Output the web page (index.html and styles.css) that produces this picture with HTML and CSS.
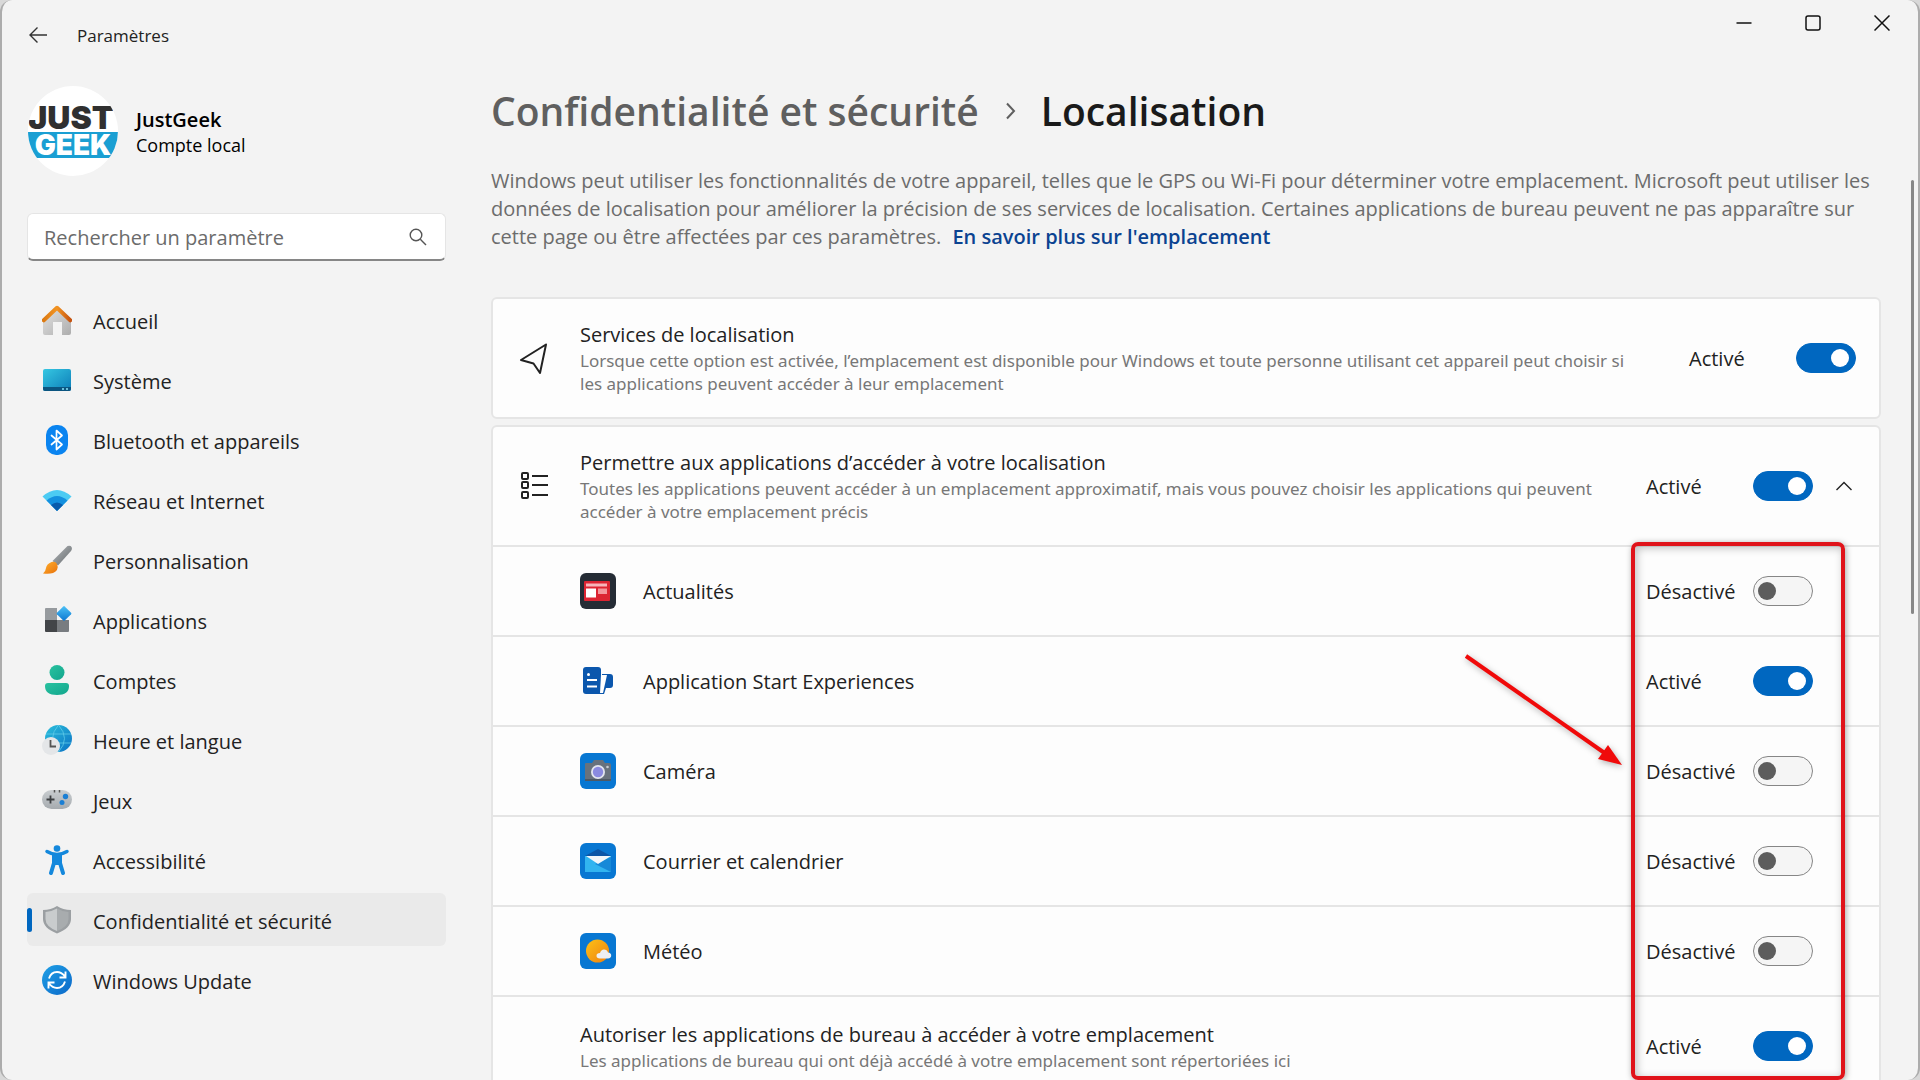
FILE: index.html
```
<!DOCTYPE html>
<html lang="fr">
<head>
    <meta charset="UTF-8">
    <meta name="viewport" content="width=device-width, initial-scale=1.0">
    <title>Paramètres</title>
    <link rel="stylesheet" href="styles.css">
</head>
<body>
    <div class="window">
        <header class="titlebar">
            <button class="back" aria-label="Retour">
                <svg width="20" height="18" viewBox="0 0 20 18"><path d="M19 9H2M9.500 1.500L2 9l7.500 7.500" fill="none" stroke="#333" stroke-width="1.400"/></svg>
            </button>
            <span class="window-title">Paramètres</span>
            <div class="window-controls">
                <button aria-label="Réduire"><svg width="16" height="16" viewBox="0 0 16 16"><path d="M.5 8h15" stroke="#111" stroke-width="1.500"/></svg></button>
                <button aria-label="Agrandir"><svg width="16" height="16" viewBox="0 0 16 16"><rect x="1" y="1" width="14" height="14" rx="2" fill="none" stroke="#111" stroke-width="1.500"/></svg></button>
                <button aria-label="Fermer"><svg width="16" height="16" viewBox="0 0 16 16"><path d="M.5.5l15 15M15.500.5l-15 15" stroke="#111" stroke-width="1.500"/></svg></button>
            </div>
        </header>

        <div class="layout">
            <aside class="sidebar">
                <div class="account">
                    <svg class="avatar" viewBox="0 0 90 90">
                        <defs><clipPath id="round"><circle cx="45" cy="45" r="45"/></clipPath></defs>
                        <circle cx="45" cy="45" r="45" fill="#fff"/>
                        <g clip-path="url(#round)">
                            <text x="43" y="43" class="logo-top">JUST</text>
                            <rect y="46" width="90" height="26" fill="#1a9fd3"/>
                            <text x="45" y="69" class="logo-bottom">GEEK</text>
                        </g>
                    </svg>
                    <div>
                        <div class="account-name">JustGeek</div>
                        <div class="account-type">Compte local</div>
                    </div>
                </div>

                <div class="search">
                    <input type="text" placeholder="Rechercher un paramètre" aria-label="Rechercher un paramètre">
                    <svg width="18" height="18" viewBox="0 0 18 18"><circle cx="7" cy="7" r="5.800" fill="none" stroke="#555" stroke-width="1.400"/><path d="M11.300 11.300l5.700 5.700" stroke="#555" stroke-width="1.400"/></svg>
                </div>

                <nav class="nav">
                    <a href="#">
                        <svg viewBox="0 0 30 30">
                            <defs>
                                <linearGradient id="wall" x1="0" y1="0" x2="1" y2="1"><stop offset="0" stop-color="#e3e3e3"/><stop offset="1" stop-color="#adadad"/></linearGradient>
                                <linearGradient id="roof" x1="0" y1="0" x2="1" y2="0"><stop offset="0" stop-color="#dc7a12"/><stop offset=".5" stop-color="#f29422"/><stop offset="1" stop-color="#c65410"/></linearGradient>
                            </defs>
                            <path d="M1 14L15 2l14 12v14q0 2-2 2h-7V17h-9v13H3q-2 0-2-2z" fill="url(#wall)"/>
                            <path d="M1.800 15.300L15 2.800l13.200 12.500" fill="none" stroke="url(#roof)" stroke-width="4" stroke-linecap="round" stroke-linejoin="round"/>
                        </svg>
                        <span>Accueil</span>
                    </a>
                    <a href="#">
                        <svg viewBox="0 0 30 30">
                            <defs><linearGradient id="screen" x1="0" y1="0" x2="1" y2="1"><stop offset="0" stop-color="#35c7e2"/><stop offset="1" stop-color="#0d7db8"/></linearGradient></defs>
                            <rect x="1" y="4" width="28" height="22" rx="2" fill="url(#screen)"/>
                            <path d="M1 22h28v2q0 2-2 2H3q-2 0-2-2z" fill="#0b5580"/>
                            <path d="M20 24h2M24 24h2" stroke="#8be3f7" stroke-width="1.500"/>
                        </svg>
                        <span>Système</span>
                    </a>
                    <a href="#">
                        <svg viewBox="0 0 30 30">
                            <rect x="4" width="22" height="30" rx="10" fill="#0a84f0"/>
                            <path d="M9.500 10.500l10.500 9-5.500 5V5.500l5.500 5-10.500 9" fill="none" stroke="#fff" stroke-width="1.700" stroke-linejoin="round" stroke-linecap="round"/>
                        </svg>
                        <span>Bluetooth et appareils</span>
                    </a>
                    <a href="#">
                        <svg viewBox="0 0 30 30">
                            <path d="M.5 11.500Q15-1.500 29.500 11.500L15 26z" fill="#4ccbf3"/>
                            <path d="M4.500 15.500q10.500-9 21 0L15 26z" fill="#1490df"/>
                            <path d="M9 20q6-5 12 0l-6 6z" fill="#0a5bab"/>
                        </svg>
                        <span>Réseau et Internet</span>
                    </a>
                    <a href="#">
                        <svg viewBox="0 0 30 30">
                            <defs>
                                <linearGradient id="handle" x1="0" y1="0" x2="1" y2="1"><stop offset="0" stop-color="#b5b9bc"/><stop offset="1" stop-color="#64696c"/></linearGradient>
                                <linearGradient id="bristle" x1="0" y1="0" x2="1" y2="1"><stop offset="0" stop-color="#ffb02e"/><stop offset="1" stop-color="#e8710a"/></linearGradient>
                            </defs>
                            <path d="M25.500 1q3-1 4 1t-.5 4L16 20.500 10.500 16z" fill="url(#handle)"/>
                            <path d="M9.500 17q4-1 5.500 2t0 6q-4 5-14 3.500Q3.500 27 4 23t5.500-6z" fill="url(#bristle)"/>
                        </svg>
                        <span>Personnalisation</span>
                    </a>
                    <a href="#">
                        <svg viewBox="0 0 30 30">
                            <defs><linearGradient id="gem" x1="0" y1="0" x2="1" y2="1"><stop offset="0" stop-color="#4cc2f7"/><stop offset="1" stop-color="#0c76d0"/></linearGradient></defs>
                            <path d="M3 4q0-1 1-1h11v12H3z" fill="#969a9e"/>
                            <path d="M3 15h12v12H4q-1 0-1-1z" fill="#424548"/>
                            <path d="M15 15h12v11q0 1-1 1H15z" fill="#787c80"/>
                            <rect x="16.500" y="3" width="11" height="11" rx="1" transform="rotate(45 22 8.500)" fill="url(#gem)"/>
                        </svg>
                        <span>Applications</span>
                    </a>
                    <a href="#">
                        <svg viewBox="0 0 30 30">
                            <defs><linearGradient id="person" x1="0" y1="0" x2="1" y2="1"><stop offset="0" stop-color="#2ac2a0"/><stop offset="1" stop-color="#12a68d"/></linearGradient></defs>
                            <circle cx="15" cy="7.500" r="7.500" fill="url(#person)"/>
                            <path d="M6 18h18q3 0 3 3 0 9-12 9T3 21q0-3 3-3z" fill="url(#person)"/>
                        </svg>
                        <span>Comptes</span>
                    </a>
                    <a href="#">
                        <svg viewBox="0 0 30 30">
                            <defs><linearGradient id="globe" x1="0" y1="0" x2="1" y2="1"><stop offset="0" stop-color="#2cc0dc"/><stop offset="1" stop-color="#0b72c4"/></linearGradient></defs>
                            <circle cx="16.500" cy="13.500" r="13.500" fill="url(#globe)"/>
                            <path d="M4 9h25M4 18h25M16.500 0q-12 13.500 0 27M16.500 0q12 13.500 0 27" fill="none" stroke="#5fcbe8" stroke-width=".8"/>
                            <circle cx="9" cy="21" r="9" fill="#e4e6e8"/>
                            <path d="M8.500 15v6.500H14" fill="none" stroke="#555" stroke-width="1.800"/>
                        </svg>
                        <span>Heure et langue</span>
                    </a>
                    <a href="#">
                        <svg viewBox="0 0 30 30">
                            <defs><linearGradient id="pad" x1="0" y1="0" x2="0" y2="1"><stop offset="0" stop-color="#c9cdd0"/><stop offset="1" stop-color="#a6abaf"/></linearGradient></defs>
                            <rect y="5" width="30" height="19" rx="9.500" fill="url(#pad)"/>
                            <path d="M8.500 10.500v8M4.500 14.500h8" stroke="#3c3f42" stroke-width="1.800"/>
                            <path d="M12.500 5v2.500M17.500 5v2.500" stroke="#555" stroke-width="1.500"/>
                            <circle cx="23.500" cy="11.500" r="2.700" fill="#1b7fd4"/>
                            <circle cx="20" cy="17.500" r="2.500" fill="#1b7fd4"/>
                        </svg>
                        <span>Jeux</span>
                    </a>
                    <a href="#">
                        <svg viewBox="0 0 30 30">
                            <circle cx="15" cy="3.500" r="3.300" fill="#1488dc"/>
                            <path d="M5 6.500q5 3 10 3t10-3" fill="none" stroke="#1488dc" stroke-width="3.500" stroke-linecap="round"/>
                            <path d="M12 10v8L9 28M18 10v8l3 10" fill="none" stroke="#1488dc" stroke-width="4" stroke-linecap="round" stroke-linejoin="round"/>
                            <path d="M11 9h8v11h-8z" fill="#1488dc"/>
                        </svg>
                        <span>Accessibilité</span>
                    </a>
                    <a href="#" class="active" aria-current="page">
                        <svg viewBox="0 0 30 30">
                            <path d="M15 1q6 4 14 4v9q0 9-14 14.500Q1 23 1 14V5q8 0 14-4z" fill="#9b9fa2"/>
                            <path d="M15 3.500q5 3 11.500 3.500v7q0 7.500-11.500 12z" fill="#a8acae"/>
                            <path d="M15 3.500Q10 6.500 3.500 7v7q0 7.500 11.500 12z" fill="#c9cccd"/>
                        </svg>
                        <span>Confidentialité et sécurité</span>
                    </a>
                    <a href="#">
                        <svg viewBox="0 0 30 30">
                            <defs><linearGradient id="update" x1="0" y1="0" x2="1" y2="1"><stop offset="0" stop-color="#1fa0e6"/><stop offset="1" stop-color="#0b68c8"/></linearGradient></defs>
                            <circle cx="15" cy="15" r="15" fill="url(#update)"/>
                            <path d="M7 13.500Q9 7 15 7q4.500 0 8 4.500M23.500 6.500v6h-6M23 16.500Q21 23 15 23q-4.500 0-8-4.500M6.500 23.500v-6h6" fill="none" stroke="#fff" stroke-width="1.900"/>
                        </svg>
                        <span>Windows Update</span>
                    </a>
                </nav>
            </aside>

            <main class="content">
                <h1 class="breadcrumb">
                    <a href="#">Confidentialité et sécurité</a>
                    <svg width="12" height="18" viewBox="0 0 12 18"><path d="M3 1.500L10 9l-7 7.500" fill="none" stroke="#5f5f5f" stroke-width="2"/></svg>
                    <span>Localisation</span>
                </h1>
                <p class="intro">
                    Windows peut utiliser les fonctionnalités de votre appareil, telles que le GPS ou Wi-Fi pour déterminer votre emplacement. Microsoft peut utiliser les données de localisation pour améliorer la précision de ses services de localisation. Certaines applications de bureau peuvent ne pas apparaître sur cette page ou être affectées par ces paramètres. <a href="#">En savoir plus sur l'emplacement</a>
                </p>

                <section class="card">
                    <div class="setting">
                        <svg class="setting-icon" viewBox="0 0 32 32"><path d="M28 2.500L3 18l12.500 3.500L22 31z" fill="none" stroke="#222" stroke-width="2" stroke-linejoin="round"/></svg>
                        <div class="setting-text">
                            <label class="setting-title" for="services">Services de localisation</label>
                            <p>Lorsque cette option est activée, l’emplacement est disponible pour Windows et toute personne utilisant cet appareil peut choisir si les applications peuvent accéder à leur emplacement</p>
                        </div>
                        <span class="state">Activé</span>
                        <input type="checkbox" class="switch" id="services" checked>
                    </div>
                </section>

                <section class="card">
                    <div class="setting">
                        <svg class="setting-icon" viewBox="0 0 32 32"><g fill="none" stroke="#222" stroke-width="2"><rect x="4" y="3" width="6" height="6" rx="1"/><rect x="4" y="12" width="6" height="6" rx="1"/><rect x="4" y="22" width="6" height="6" rx="1"/><path d="M14 6h16M14 15h16M14 25h16"/></g></svg>
                        <div class="setting-text">
                            <label class="setting-title" for="apps">Permettre aux applications d’accéder à votre localisation</label>
                            <p>Toutes les applications peuvent accéder à un emplacement approximatif, mais vous pouvez choisir les applications qui peuvent accéder à votre emplacement précis</p>
                        </div>
                        <span class="state">Activé</span>
                        <input type="checkbox" class="switch" id="apps" checked>
                        <button class="collapse" aria-label="Réduire la liste"><svg width="16" height="10" viewBox="0 0 16 10"><path d="M.5 9L8 1.500 15.500 9" fill="none" stroke="#222" stroke-width="1.400"/></svg></button>
                    </div>

                    <div class="apps">
                        <div class="app">
                            <svg class="app-icon" viewBox="0 0 36 36">
                                <rect width="36" height="36" rx="6" fill="#252c35"/>
                                <rect x="4" y="8" width="26" height="20" rx="1" fill="#dc2432"/>
                                <path d="M6 10.500h21v3H6z" fill="#f6b5ba"/>
                                <rect x="6" y="15.500" width="10" height="9" fill="#fff"/>
                                <path d="M18 15.500h9V21h-9z" fill="#f3979d"/>
                            </svg>
                            <label class="app-name" for="news">Actualités</label>
                            <span class="state">Désactivé</span>
                            <input type="checkbox" class="switch" id="news">
                        </div>
                        <div class="app">
                            <svg class="app-icon" viewBox="0 0 36 36">
                                <path d="M6 4h12q3 0 3 3v24H6q-3 0-3-3V7q0-3 3-3z" fill="#0b57ad"/>
                                <path d="M22 11h8q3 0 3 3v8q0 3-3 3h-4l-2 6h-3z" fill="#0b57ad"/>
                                <path d="M21 12h6l-4 18h-3z" fill="#fff"/>
                                <circle cx="8.500" cy="11.500" r="1.500" fill="#fff"/>
                                <path d="M7 17h10M7 23.500h10" stroke="#fff" stroke-width="2"/>
                            </svg>
                            <label class="app-name" for="start">Application Start Experiences</label>
                            <span class="state">Activé</span>
                            <input type="checkbox" class="switch" id="start" checked>
                        </div>
                        <div class="app">
                            <svg class="app-icon" viewBox="0 0 36 36">
                                <rect width="36" height="36" rx="6" fill="#0877d2"/>
                                <path d="M5 11q0-1 1-1h6l2-3h9l2 3h4q2 0 2 2v14q0 2-2 2H5z" fill="#68727d"/>
                                <path d="M5 26h26v1q0 1-1 1H5z" fill="#4d5965"/>
                                <circle cx="18" cy="19" r="7" fill="#e2e5ef"/>
                                <circle cx="18" cy="19" r="5.200" fill="#8a8ae0"/>
                                <circle cx="27.500" cy="14" r="1.300" fill="#c6cbd2"/>
                            </svg>
                            <label class="app-name" for="camera">Caméra</label>
                            <span class="state">Désactivé</span>
                            <input type="checkbox" class="switch" id="camera">
                        </div>
                        <div class="app">
                            <svg class="app-icon" viewBox="0 0 36 36">
                                <rect width="36" height="36" rx="6" fill="#0877d2"/>
                                <path d="M5 13l13-7 13 7z" fill="#0b55a6"/>
                                <path d="M5 13h26v16H5z" fill="#31b4f0"/>
                                <path d="M31 14v15L15 21z" fill="#1689d8"/>
                                <path d="M6 13h25l-13 8z" fill="#f1f6fa"/>
                            </svg>
                            <label class="app-name" for="mail">Courrier et calendrier</label>
                            <span class="state">Désactivé</span>
                            <input type="checkbox" class="switch" id="mail">
                        </div>
                        <div class="app">
                            <svg class="app-icon" viewBox="0 0 36 36">
                                <defs><linearGradient id="sun" x1="0" y1="0" x2="1" y2="1"><stop offset="0" stop-color="#fdc116"/><stop offset="1" stop-color="#ee8110"/></linearGradient></defs>
                                <rect width="36" height="36" rx="6" fill="#0877d2"/>
                                <circle cx="17.500" cy="18" r="11.500" fill="url(#sun)"/>
                                <path d="M20 25.500q-3.500 0-3.500-2.700t3.500-2.800q1-3.500 4-3.500t4 3q3.200.3 3.200 3t-3.200 3z" fill="#eef0f3"/>
                            </svg>
                            <label class="app-name" for="weather">Météo</label>
                            <span class="state">Désactivé</span>
                            <input type="checkbox" class="switch" id="weather">
                        </div>
                        <div class="app app-desktop">
                            <div class="setting-text">
                                <label class="setting-title" for="desktop">Autoriser les applications de bureau à accéder à votre emplacement</label>
                                <p>Les applications de bureau qui ont déjà accédé à votre emplacement sont répertoriées ici</p>
                            </div>
                            <span class="state">Activé</span>
                            <input type="checkbox" class="switch" id="desktop" checked>
                        </div>

                        <!-- red frame and arrow drawn over the switches -->
                        <div class="highlight"></div>
                        <svg class="arrow" viewBox="0 0 170 126">
                            <path d="M6 6l140 98" stroke="#f00a0a" stroke-width="4"/>
                            <path d="M162 115l-24-6 10-14z" fill="#f00a0a"/>
                        </svg>
                    </div>
                </section>
            </main>
        </div>
        <div class="scrollbar"></div>
    </div>
</body>
</html>
```
FILE: styles.css
```
:root {
    --window-bg: #f3f3f3;
    --card-bg: #fdfdfd;
    --border: #e5e5e5;
    --accent: #0067c0;
    --text: #222222;
    --text-muted: #777777;
    --mark: #e0131a;
}

* {
    margin: 0;
    padding: 0;
    box-sizing: border-box;
}

body {
    font-family: 'Open Sans', 'Noto Sans', sans-serif;
    font-size: 20px;
    line-height: 28px;
    color: var(--text);
    background-color: #d8d8d8;
}

button {
    border: none;
    background: none;
    cursor: pointer;
}

a {
    color: inherit;
    text-decoration: none;
}

svg {
    display: block;
    flex-shrink: 0;
}

.window {
    position: relative;
    height: 100vh;
    overflow: hidden;
    display: flex;
    flex-direction: column;
    background-color: var(--window-bg);
    border: solid #acacac;
    border-width: 0 2px;
    border-radius: 12px;
}

.titlebar {
    display: flex;
    align-items: flex-start;
    height: 72px;
    padding: 0 2px 0 26px;
}

.back {
    padding-top: 26px;
}

.window-title {
    flex: 1;
    padding: 22px 0 0 29px;
    font-size: 17px;
}

.window-controls {
    display: flex;
}

.window-controls button {
    width: 69px;
    height: 45px;
    display: flex;
    align-items: center;
    justify-content: center;
}

.layout {
    flex: 1;
    min-height: 0;
    display: flex;
}

.sidebar {
    width: 444px;
    flex-shrink: 0;
    padding: 14px 0 0 25px;
}

.account {
    display: flex;
    align-items: center;
    gap: 18px;
    padding-left: 1px;
    color: #000;
}

.avatar {
    width: 90px;
    height: 90px;
}

.logo-top,
.logo-bottom {
    font-family: Inter, sans-serif;
    font-weight: 900;
    text-anchor: middle;
}

.logo-top {
    font-size: 32px;
    fill: #303030;
}

.logo-bottom {
    font-size: 28px;
    fill: #fff;
}

.account-name {
    padding-top: 2px;
    font-size: 20px;
    line-height: 26px;
    font-weight: 600;
}

.account-type {
    font-size: 18px;
    line-height: 24px;
}

.search {
    display: flex;
    align-items: center;
    height: 48px;
    margin-top: 37px;
    padding: 0 18px 0 16px;
    background-color: #fff;
    border: 1px solid var(--border);
    border-bottom: 2px solid #868686;
    border-radius: 6px;
}

.search input {
    flex: 1;
    min-width: 0;
    padding-top: 2px;
    border: none;
    outline: none;
    background: none;
    font: inherit;
}

.search input::placeholder {
    color: #6b6b6b;
}

.nav {
    display: flex;
    flex-direction: column;
    gap: 7px;
    margin-top: 32px;
}

.nav a {
    position: relative;
    display: flex;
    align-items: center;
    gap: 21px;
    height: 53px;
    padding-left: 15px;
    border-radius: 6px;
}

.nav svg {
    width: 30px;
    height: 30px;
}

.nav span {
    padding-top: 4px;
}

.nav .active {
    background-color: #eaeaea;
}

.nav .active::before {
    content: '';
    position: absolute;
    left: 0;
    width: 5px;
    height: 24px;
    border-radius: 3px;
    background-color: var(--accent);
}

.content {
    flex: 1;
    min-width: 0;
    padding: 12px 37px 0 45px;
}

.breadcrumb {
    display: flex;
    align-items: center;
    gap: 25px;
    font-size: 39px;
    line-height: 54px;
    font-weight: 600;
    color: #1a1a1a;
}

.breadcrumb a {
    color: #5f5f5f;
}

.intro {
    margin: 29px 0 46px;
    color: #6c6c6c;
}

.intro a {
    margin-left: 6px;
    font-weight: 600;
    color: #0b4391;
}

.card {
    margin-bottom: 6px;
    background-color: var(--card-bg);
    border: 2px solid var(--border);
    border-radius: 6px;
}

.setting {
    display: flex;
    align-items: center;
    min-height: 118px;
    padding: 0 23px 0 25px;
}

.setting-icon {
    width: 32px;
    height: 32px;
    margin-right: 30px;
}

.setting-text {
    flex: 1;
    min-width: 0;
    margin-right: 42px;
}

.setting-title {
    display: block;
}

/* Noto Sans runs slightly wider at this size */
.setting-text p {
    font-family: 'Noto Sans', sans-serif;
    font-size: 17px;
    line-height: 23px;
    color: var(--text-muted);
}

.state {
    width: 107px;
    padding-top: 2px;
}

.switch {
    appearance: none;
    flex-shrink: 0;
    display: flex;
    align-items: center;
    width: 60px;
    height: 30px;
    padding: 0 4px;
    border: 1px solid #868686;
    border-radius: 15px;
    background-color: #f5f5f5;
    cursor: pointer;
}

.switch::before {
    content: '';
    width: 18px;
    height: 18px;
    border-radius: 50%;
    background-color: #5d5d5d;
}

.switch:checked {
    justify-content: flex-end;
    padding: 0 6px;
    border-color: var(--accent);
    background-color: var(--accent);
}

.switch:checked::before {
    background-color: #fff;
}

.collapse {
    margin: 0 4px 0 23px;
}

.apps {
    position: relative;
}

.app {
    display: flex;
    align-items: center;
    height: 90px;
    padding: 0 66px 0 87px;
    border-top: 2px solid var(--border);
}

.app-icon {
    width: 36px;
    height: 36px;
    margin-right: 27px;
}

.app-name {
    flex: 1;
    padding-top: 2px;
}

.app-desktop {
    height: 100px;
}

.highlight {
    position: absolute;
    top: -3px;
    right: 34px;
    width: 214px;
    height: 538px;
    border: 4px solid var(--mark);
    border-radius: 7px;
    box-shadow: 1px 1px 6px rgba(0, 0, 0, 0.35), inset 2px 2px 8px rgba(0, 0, 0, 0.25);
}

.arrow {
    position: absolute;
    top: 105px;
    right: 249px;
    width: 170px;
    height: 126px;
    filter: drop-shadow(1px 2px 3px rgba(0, 0, 0, 0.3));
}

.scrollbar {
    position: absolute;
    top: 180px;
    right: 4px;
    width: 3px;
    height: 434px;
    border-radius: 2px;
    background-color: #878787;
}
```
